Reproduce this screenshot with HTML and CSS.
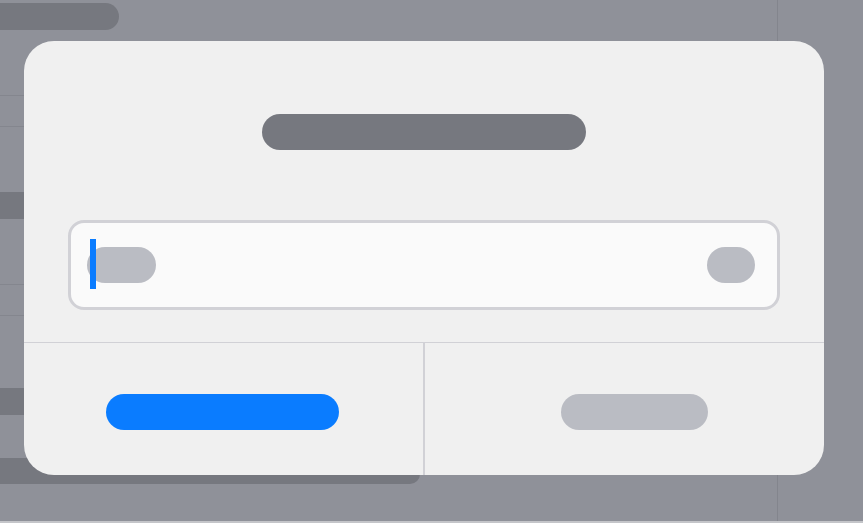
FILE: index.html
```html
<!DOCTYPE html>
<html lang="en">
<head>
<meta charset="utf-8">
<title>Dialog</title>
<link rel="stylesheet" href="styles.css">
</head>
<body>
<div class="page">
  <div class="main">
    <div class="top-pill"></div>
    <div class="row row-tall"></div>
    <div class="row row-short"></div>
    <div class="gap gap-a"></div>
    <div class="band"></div>
    <div class="row row-tall2"></div>
    <div class="row row-short"></div>
    <div class="gap gap-b"></div>
    <div class="band"></div>
    <div class="gap gap-c"></div>
    <div class="band band-wide"></div>
  </div>
  <div class="side"></div>
</div>
<div class="bottom-strip"></div>

<div class="overlay">
  <div class="dialog">
    <div class="dialog-body">
      <div class="title-pill"></div>
      <div class="field">
        <span class="caret"></span>
        <span class="field-pill field-pill-text"></span>
        <span class="field-pill field-pill-clear"></span>
      </div>
    </div>
    <div class="dialog-actions">
      <div class="action action-primary"><span class="btn-pill btn-blue"></span></div>
      <div class="action action-secondary"><span class="btn-pill btn-gray"></span></div>
    </div>
  </div>
</div>
</body>
</html>
```

FILE: styles.css
```css
html, body {
  margin: 0;
  padding: 0;
  width: 863px;
  height: 523px;
  overflow: hidden;
  background: #8f9199;
  font-family: "Inter", "Liberation Sans", sans-serif;
}

.page {
  display: flex;
  height: 521px;
}

.main {
  width: 777px;
  border-right: 1px solid #83858d;
  display: flex;
  flex-direction: column;
}

.side {
  flex: 1;
}

.top-pill {
  margin-top: 3px;
  height: 27px;
  width: 119px;
  background: #76787f;
  border-radius: 0 14px 14px 0;
  flex: none;
}

.row {
  flex: none;
  border-bottom: 1px solid #84868e;
}

.row-tall { height: 65px; }
.row-short { height: 30px; }
.row-tall2 { height: 65px; }

.gap { flex: none; }
.gap-a { height: 65px; }
.gap-b { height: 72px; }
.gap-c { height: 43px; }

.band {
  flex: none;
  height: 27px;
  background: #76787f;
}

.band-wide {
  height: 26px;
  width: 420px;
  border-radius: 0 10px 10px 0;
}

.bottom-strip {
  height: 2px;
  background: #c4c5c9;
}

.overlay {
  position: fixed;
  inset: 0;
  padding: 41px 0 0 24px;
}

.dialog {
  width: 800px;
  height: 434px;
  background: #f0f0f0;
  border-radius: 30px;
  overflow: hidden;
  display: flex;
  flex-direction: column;
}

.dialog-body {
  height: 302px;
  flex: none;
  border-bottom: 1px solid #d1d1d6;
  display: flex;
  flex-direction: column;
  align-items: center;
  padding-top: 73px;
  box-sizing: border-box;
}

.title-pill {
  width: 324px;
  height: 36px;
  border-radius: 18px;
  background: #76787f;
}

.field {
  position: relative;
  margin-top: 70px;
  width: 712px;
  height: 90px;
  box-sizing: border-box;
  border: 3px solid #d1d1d6;
  border-radius: 16px;
  background: #fafafa;
  display: flex;
  align-items: center;
  justify-content: space-between;
  padding: 0 22px 0 16px;
}

.caret {
  position: absolute;
  left: 19px;
  top: 16px;
  width: 6px;
  height: 50px;
  background: #0a7cff;
}

.field-pill {
  height: 36px;
  border-radius: 18px;
  background: #babcc3;
}

.field-pill-text { width: 69px; }
.field-pill-clear { width: 48px; }

.dialog-actions {
  flex: 1;
  display: flex;
}

.action {
  display: flex;
  align-items: flex-start;
  padding-top: 51px;
  box-sizing: border-box;
}

.action-primary {
  width: 401px;
  border-right: 2px solid #d1d1d6;
  padding-left: 82px;
}

.action-secondary {
  width: 399px;
  padding-left: 136px;
}

.btn-pill {
  height: 36px;
  border-radius: 18px;
}

.btn-blue {
  width: 233px;
  background: #0a7cff;
}

.btn-gray {
  width: 147px;
  background: #babcc3;
}
```
